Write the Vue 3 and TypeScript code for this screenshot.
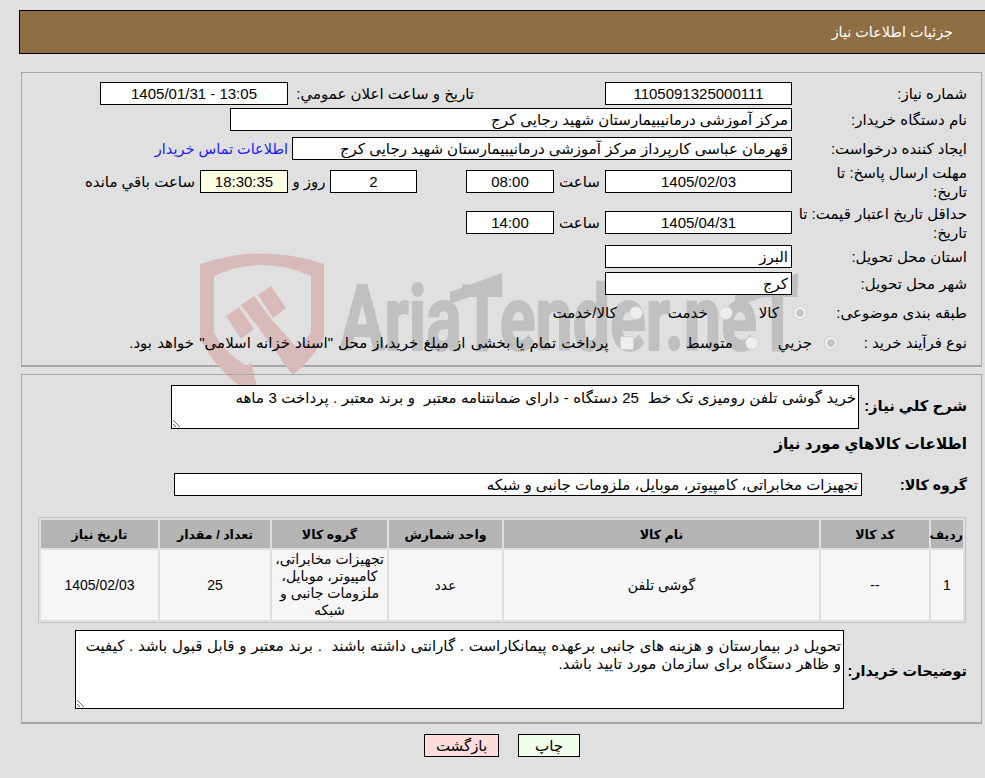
<script setup lang="ts">
const desc = 'خرید گوشی تلفن رومیزی تک خط  25 دستگاه - دارای ضمانتنامه معتبر  و برند معتبر . پرداخت 3 ماهه'
const notes = 'تحویل در بیمارستان و هزینه های جانبی برعهده پیمانکاراست . گارانتی داشته باشند  . برند معتبر و قابل قبول باشد . کیفیت و ظاهر دستگاه برای سازمان مورد تایید باشد.'
const headers = ['ردیف', 'کد کالا', 'نام کالا', 'واحد شمارش', 'گروه کالا', 'تعداد / مقدار', 'تاریخ نیاز']
</script>

<template>
  <div class="page" dir="rtl">
    <header class="title">جزئیات اطلاعات نیاز</header>

    <section class="panel first">
      <svg class="mark" viewBox="0 0 620 150" width="620" height="150" aria-hidden="true">
        <g transform="translate(-190 -245)">
          <path fill="#d9baba" d="M200 264 Q262 243 324 264 V337 Q312 360 293 375 L281 360 Q302 345 311 333 V276 Q262 254 214 276 V333 Q220 345 235 358 L247 366 L251 362 L257 386 H240 Q212 365 200 337 Z" />
          <path fill="#d9baba" d="M226 316 L239 307 L254 329 L241 339 Z M241 305 L254 296 L272 320 L301 352 L293 375 L258 327 Z M258 295 L271 286 L286 308 L273 318 Z" />
          <text class="mark-text" x="340" y="350" font-family="Roboto, sans-serif" font-weight="700" font-size="91" fill="#c0c0c0" stroke="#c0c0c0" stroke-width="2" textLength="458" lengthAdjust="spacingAndGlyphs">AriaTender.neT</text>
          <path fill="#c0c0c0" d="M450 292 L502 273 V285 L450 304 Z M735 295 L798 273 V285 L735 307 Z" />
        </g>
      </svg>

      <div class="row h1">
        <label class="lbl">شماره نیاز:</label>
        <input class="box w187" readonly value="1105091325000111" />
        <label class="lbl mid">تاریخ و ساعت اعلان عمومي:</label>
        <input class="box w188" readonly value="13:05 - 1405/01/31" />
      </div>
      <div class="row h2">
        <label class="lbl">نام دستگاه خریدار:</label>
        <input class="box w562 start" readonly value="مرکز آموزشی درمانیبیمارستان شهید رجایی کرج" />
      </div>
      <div class="row h3">
        <label class="lbl">ایجاد کننده درخواست:</label>
        <input class="box w500 start" readonly value="قهرمان عباسی کارپرداز مرکز آموزشی درمانیبیمارستان شهید رجایی کرج" />
        <a class="link" href="#">اطلاعات تماس خریدار</a>
      </div>
      <div class="row h4">
        <label class="lbl">مهلت ارسال پاسخ: تا<br />تاریخ:</label>
        <input class="box w187" readonly value="1405/02/03" />
        <span class="unit">ساعت</span>
        <input class="box w88" readonly value="08:00" />
        <input class="box w87 gap49" readonly value="2" />
        <span class="unit small">روز و</span>
        <input class="box w88 clock" readonly value="18:30:35" />
        <span class="unit rest">ساعت باقي مانده</span>
      </div>
      <div class="row h5">
        <label class="lbl">حداقل تاریخ اعتبار قیمت: تا<br />تاریخ:</label>
        <input class="box w187" readonly value="1405/04/31" />
        <span class="unit">ساعت</span>
        <input class="box w88" readonly value="14:00" />
      </div>
      <div class="row h6">
        <label class="lbl">استان محل تحویل:</label>
        <input class="box w187 start" readonly value="البرز" />
      </div>
      <div class="row h7">
        <label class="lbl">شهر محل تحویل:</label>
        <input class="box w187 start" readonly value="کرج" />
      </div>
      <div class="row h8">
        <label class="lbl">طبقه بندی موضوعی:</label>
        <div class="choices c1">
          <input class="radio" type="radio" name="a" checked disabled />
          <span>کالا</span>
          <input class="radio" type="radio" name="a" disabled />
          <span>خدمت</span>
          <input class="radio" type="radio" name="a" disabled />
          <span>کالا/خدمت</span>
        </div>
      </div>
      <div class="row h9">
        <label class="lbl">نوع فرآیند خرید :</label>
        <div class="choices c2">
          <input class="radio" type="radio" name="b" checked disabled />
          <span>جزيي</span>
          <input class="radio" type="radio" name="b" disabled />
          <span>متوسط</span>
          <input class="check" type="checkbox" disabled />
          <span>پرداخت تمام یا بخشی از مبلغ خرید،از محل "اسناد خزانه اسلامی" خواهد بود.</span>
        </div>
      </div>
    </section>

    <section class="panel second">
      <div class="wide r-desc">
        <label class="blbl">شرح کلي نیاز:</label>
        <textarea class="area a1" dir="rtl" readonly :value="desc"></textarea>
      </div>
      <h2 class="sub">اطلاعات کالاهاي مورد نياز</h2>
      <div class="wide r-group">
        <label class="blbl g">گروه کالا:</label>
        <input class="box w688 start" readonly value="تجهیزات مخابراتی، کامپیوتر، موبایل، ملزومات جانبی و شبکه" />
      </div>
      <table class="grid">
        <colgroup>
          <col class="k1" /><col class="k2" /><col class="k3" /><col class="k4" /><col class="k5" /><col class="k6" /><col class="k7" />
        </colgroup>
        <thead>
          <tr><th v-for="h in headers" :key="h">{{ h }}</th></tr>
        </thead>
        <tbody>
          <tr>
            <td>1</td>
            <td>--</td>
            <td>گوشی تلفن</td>
            <td>عدد</td>
            <td>تجهیزات مخابراتی، کامپیوتر، موبایل، ملزومات جانبی و شبکه</td>
            <td>25</td>
            <td>1405/02/03</td>
          </tr>
        </tbody>
      </table>
      <div class="wide r-notes">
        <label class="blbl n">توضیحات خریدار:</label>
        <textarea class="area a2" dir="rtl" readonly :value="notes"></textarea>
      </div>
    </section>

    <div class="actions">
      <button class="btn print" type="button">چاپ</button>
      <button class="btn back" type="button">بازگشت</button>
    </div>
  </div>
</template>

<style>
html, body { margin: 0; background: #e0e0e0; }
</style>

<style scoped>
.page {
  width: 985px;
  height: 778px;
  box-sizing: border-box;
  padding-top: 10px;
  background: #e0e0e0;
  color: #000;
  font: 15px "Liberation Sans", "DejaVu Sans", sans-serif;
  overflow: hidden;
}
.title {
  box-sizing: border-box;
  height: 44px;
  margin-left: 19px;
  padding: 13px 32px 0 0;
  background: #8e6e42;
  border: 1px solid #000;
  border-right: 0;
  color: #fff;
  font-size: 14.4px;
}
.panel {
  position: relative;
  box-sizing: border-box;
  margin: 0 3px 0 21px;
  width: 961px;
  border: 1px solid #a8a8a8;
  border-width: 1px 1px 2px 1px;
}
.first {
  margin-top: 18px;
  height: 295px;
  padding-top: 9px;
}
.second {
  margin-top: 7px;
  height: 350px;
  padding-top: 10px;
}
.mark { position: absolute; left: 168px; top: 172px; overflow: visible; pointer-events: none; direction: ltr; }
.mark-text { direction: ltr; unicode-bidi: isolate; }
.row {
  position: relative;
  display: flex;
  align-items: center;
  padding-right: 14px;
  height: 23px;
}
.h2 { margin-top: 3px; }
.h3 { margin-top: 6px; }
.h4 { margin-top: 10px; }
.h5 { margin-top: 18px; }
.h6 { margin-top: 11px; }
.h7 { margin-top: 4px; }
.h8 { margin-top: 6px; }
.h9 { margin-top: 7px; }
.lbl { width: 175px; flex: none; line-height: 19px; white-space: nowrap; }
.lbl.mid { width: 317px; box-sizing: border-box; padding-right: 131px; }
.box {
  box-sizing: border-box;
  height: 23px;
  border: 1px solid #000;
  background: #fff;
  padding: 0 3px;
  margin: 0;
  text-align: center;
  font: inherit;
  color: #000;
  direction: rtl;
  flex: none;
  outline: none;
}
.start { text-align: right; }
.w187 { width: 187px; }
.w188 { width: 188px; }
.w562 { width: 562px; }
.w500 { width: 500px; }
.w88 { width: 88px; }
.w87 { width: 87px; }
.w688 { width: 688px; }
.gap49 { margin-right: 49px; }
.clock { background: #ffffe4; }
.unit { width: 51px; text-align: center; flex: none; }
.small { width: 42px; }
.rest { width: auto; margin-right: 5px; }
.link { margin-right: 4px; color: #1a1aff; text-decoration: none; font-size: 14.5px; }
.choices { display: flex; align-items: center; height: 23px; }
.choices .radio, .choices .check {
  appearance: none;
  box-sizing: border-box;
  margin: 0;
  width: 14px;
  height: 14px;
  border: 1px solid #d0d0d0;
  background: #eee;
  flex: none;
}
.radio { border-radius: 50%; }
.radio:checked { background: radial-gradient(circle, #c4c4c4 0 3.5px, #f0f0f0 4px); }
.check { border-radius: 2px; }
.c1 { margin-right: -15px; }
.c1 span:nth-of-type(1) { margin: 0 14px 0 26px; }
.c1 span:nth-of-type(2) { margin: 0 11px 0 25px; }
.c1 span:nth-of-type(3) { margin-right: 12px; }
.c2 { margin-right: -46px; }
.c2 span:nth-of-type(1) { margin: 0 12px 0 19px; }
.c2 span:nth-of-type(2) { margin: 0 12px 0 52px; }
.c2 span:nth-of-type(3) { margin-right: 11px; white-space: nowrap; word-spacing: 1px; }
.wide { position: relative; display: flex; padding-right: 14px; }
.blbl { font-weight: 700; font-size: 14.8px; flex: none; width: 108px; align-self: center; white-space: nowrap; }
.r-desc .blbl { padding-bottom: 4px; }
.blbl.g { width: 105px; font-size: 14.2px; }
.blbl.n { width: 123px; font-size: 14.4px; padding-top: 2px; }
.area {
  box-sizing: border-box;
  border: 1px solid #000;
  background: #fff;
  padding: 3px 2px;
  margin: 0;
  font: inherit;
  line-height: 18px;
  color: #000;
  outline: none;
  resize: both;
  flex: none;
  display: block;
}
.a1 { width: 688px; height: 44px; word-spacing: 0.3px; }
.a2 { width: 769px; height: 79px; padding-top: 6px; word-spacing: 0.6px; }
.sub {
  position: relative;
  margin: 3px 14px 0 0;
  height: 24px;
  font-size: 15.2px;
  line-height: 24px;
  font-weight: 700;
}
.r-group { margin-top: 17px; }
.grid {
  position: relative;
  box-sizing: border-box;
  width: 928px;
  height: 106px;
  margin: 21px 15px 0 0;
  border: 1px solid #c4c4c4;
  border-collapse: separate;
  border-spacing: 2px;
  table-layout: fixed;
  font-size: 14px;
}
.k1 { width: 32px; }
.k2 { width: 108px; }
.k3 { width: 315px; }
.k4 { width: 113px; }
.k5 { width: 115px; }
.k6 { width: 110px; }
.k7 { width: 117px; }
th { background: #b4b4b4; height: 28px; padding: 0; font-size: 12.6px; font-weight: 700; }
td { background: #f6f6f6; padding: 0 3px; text-align: center; line-height: 17px; }
.r-notes { margin-top: 7px; }
.actions { display: flex; justify-content: center; gap: 19px; margin-top: 10px; padding-left: 19px; }
.btn {
  box-sizing: border-box;
  height: 23px;
  border: 1px solid #000;
  font: inherit;
  padding: 0;
  color: #000;
}
.print { width: 62px; background: #efffe9; }
.back { width: 75px; background: #ffdcdc; }
</style>
